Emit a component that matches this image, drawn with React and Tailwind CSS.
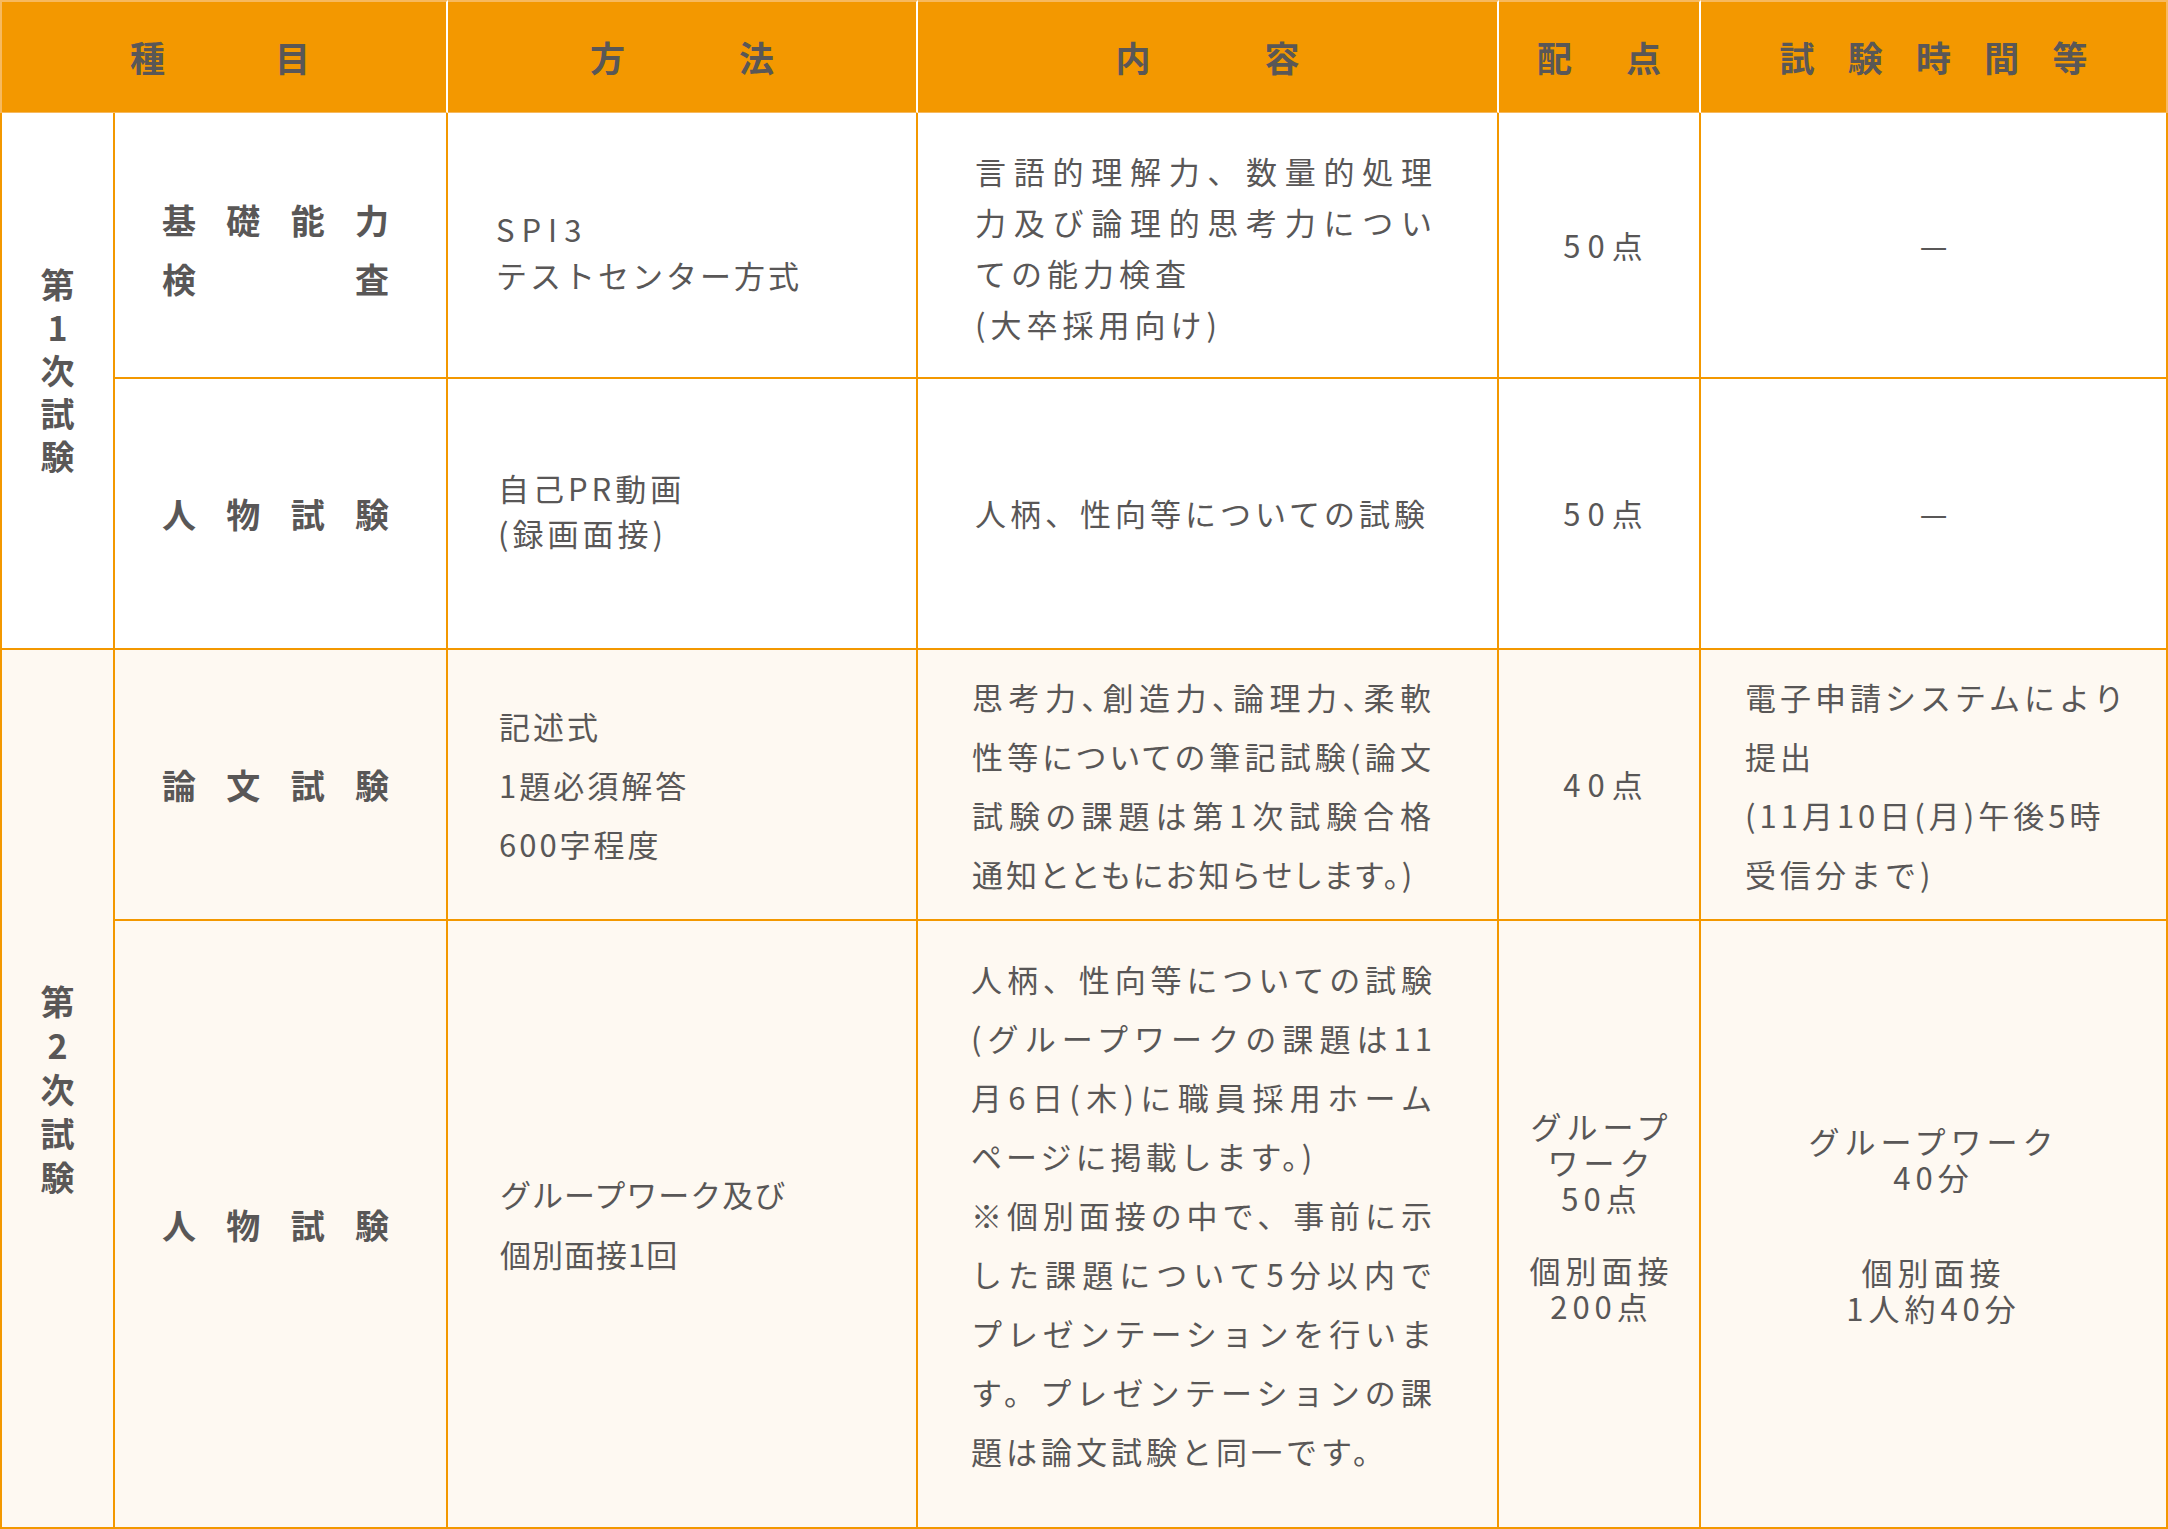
import React from 'react'

// one row of characters spread over a fixed width (種　　目 style headings)
function Spread({ text, className = '' }) {
  return (
    <div className={`flex justify-between ${className}`}>
      {text.split('').map((c, i) => (
        <span key={i}>{c}</span>
      ))}
    </div>
  )
}

// explicit lines, the ones listed in `justify` are stretched to the box width
function Lines({ lines, justify = [], className = '' }) {
  return (
    <div className={className}>
      {lines.map((line, i) => (
        <div
          key={i}
          className={justify.includes(i) ? 'whitespace-nowrap [text-align-last:justify]' : 'whitespace-nowrap'}
        >
          {line === '' ? '\u00a0' : line}
        </div>
      ))}
    </div>
  )
}

const cell = 'border-r-2 border-b-2 border-[#f39800] p-0 align-middle'

export default function App() {
  return (
    <div className="bg-white w-[2168px] min-h-[1529px]">
      <table className="table-fixed border-separate border-spacing-0 w-[2168px] font-['Noto_Sans_CJK_JP','Noto_Sans',sans-serif] text-[#595757]">
        <colgroup>
          <col className="w-[115px]" />
          <col className="w-[333px]" />
          <col className="w-[470px]" />
          <col className="w-[581px]" />
          <col className="w-[202px]" />
          <col className="w-[467px]" />
        </colgroup>
        <thead>
          <tr className="h-[113px] bg-[#f39800] text-[35px] font-bold">
            <th colSpan={2} className="p-0 border-t-2 border-l-2 border-b border-[#f7b95e] border-r-2 border-r-white">
              <Spread text="種目" className="ml-[128px] w-[180px]" />
            </th>
            <th className="p-0 border-t-2 border-b border-[#f7b95e] border-r-2 border-r-white">
              <Spread text="方法" className="mx-auto w-[184px]" />
            </th>
            <th className="p-0 border-t-2 border-b border-[#f7b95e] border-r-2 border-r-white">
              <Spread text="内容" className="mx-auto w-[184px]" />
            </th>
            <th className="p-0 border-t-2 border-b border-[#f7b95e] border-r-2 border-r-white">
              <Spread text="配点" className="mx-auto w-[124px]" />
            </th>
            <th className="p-0 border-t-2 border-b border-r-2 border-[#f7b95e]">
              <Spread text="試験時間等" className="mx-auto w-[308px]" />
            </th>
          </tr>
        </thead>
        <tbody className="text-[31px]">
          {/* 第1次試験 */}
          <tr className="h-[266px] bg-white">
            <td rowSpan={2} className={`${cell} border-l-2 text-center font-bold text-[34px] leading-[43px]`}>
              <div className="pb-[22px]">
                <div>第</div>
                <div>1</div>
                <div>次</div>
                <div>試</div>
                <div>験</div>
              </div>
            </td>
            <td className={`${cell} font-bold text-[34px] leading-[59px]`}>
              <div className="ml-[47px] w-[227px] pt-[8px]">
                <Spread text="基礎能力" />
                <Spread text="検査" />
              </div>
            </td>
            <td className={`${cell} leading-[46px]`}>
              <div className="pl-[48px] pt-[14px]">
                <div className="tracking-[7px]">SPI3</div>
                <div className="tracking-[3px]">テストセンター方式</div>
              </div>
            </td>
            <td className={`${cell} tracking-[5px] leading-[51px]`}>
              <Lines
                className="ml-[57px] w-[462px] pt-[4px]"
                justify={[0, 1]}
                lines={['言語的理解力、数量的処理', '力及び論理的思考力につい', 'ての能力検査', '(大卒採用向け)']}
              />
            </td>
            <td className={`${cell} text-center tracking-[7px] pl-[15px]`}>50点</td>
            <td className={`${cell} text-center`}>—</td>
          </tr>
          <tr className="h-[271px] bg-white">
            <td className={`${cell} font-bold text-[34px]`}>
              <Spread text="人物試験" className="ml-[47px] w-[227px]" />
            </td>
            <td className={`${cell} tracking-[4px] leading-[45px]`}>
              <Lines className="pl-[50px] pb-[8px]" lines={['自己PR動画', '(録画面接)']} />
            </td>
            <td className={`${cell} tracking-[4px]`}>
              <Lines className="pl-[57px]" lines={['人柄、性向等についての試験']} />
            </td>
            <td className={`${cell} text-center tracking-[7px] pl-[15px]`}>50点</td>
            <td className={`${cell} text-center`}>—</td>
          </tr>

          {/* 第2次試験 */}
          <tr className="h-[271px] bg-[#fef9f2]">
            <td rowSpan={2} className={`${cell} border-l-2 text-center font-bold text-[34px] leading-[44px]`}>
              <div>第</div>
              <div>2</div>
              <div>次</div>
              <div>試</div>
              <div>験</div>
            </td>
            <td className={`${cell} font-bold text-[34px]`}>
              <Spread text="論文試験" className="ml-[47px] w-[227px]" />
            </td>
            <td className={`${cell} tracking-[3px] leading-[59px]`}>
              <Lines className="pl-[51px]" lines={['記述式', '1題必須解答', '600字程度']} />
            </td>
            <td className={`${cell} tracking-[3px] leading-[59px] [font-feature-settings:'palt']`}>
              <Lines
                className="ml-[54px] w-[462px]"
                justify={[0, 1, 2]}
                lines={[
                  '思考力、創造力、論理力、柔軟',
                  '性等についての筆記試験(論文',
                  '試験の課題は第1次試験合格',
                  '通知とともにお知らせします。)',
                ]}
              />
            </td>
            <td className={`${cell} text-center tracking-[7px] pl-[15px]`}>40点</td>
            <td className={`${cell} tracking-[4px] leading-[59px]`}>
              <Lines
                className="pl-[44px]"
                lines={['電子申請システムにより', '提出', '(11月10日(月)午後5時', '受信分まで)']}
              />
            </td>
          </tr>
          <tr className="h-[608px] bg-[#fef9f2]">
            <td className={`${cell} font-bold text-[34px]`}>
              <Spread text="人物試験" className="ml-[47px] w-[227px]" />
            </td>
            <td className={`${cell} tracking-[1px] leading-[60px]`}>
              <Lines className="pl-[52px]" lines={['グループワーク及び', '個別面接1回']} />
            </td>
            <td className={`${cell} tracking-[4px] leading-[59px]`}>
              <Lines
                className="ml-[53px] w-[465px] pb-[20px]"
                justify={[0, 1, 2, 4, 5, 6, 7]}
                lines={[
                  '人柄、性向等についての試験',
                  '(グループワークの課題は11',
                  '月6日(木)に職員採用ホーム',
                  'ページに掲載します。)',
                  '※個別面接の中で、事前に示',
                  'した課題について5分以内で',
                  'プレゼンテーションを行いま',
                  'す。プレゼンテーションの課',
                  '題は論文試験と同一です。',
                ]}
              />
            </td>
            <td className={`${cell} text-center tracking-[5px] leading-[36px] pl-[5px]`}>
              <div className="pb-[16px]">
                <div>グループ</div>
                <div>ワーク</div>
                <div>50点</div>
                <div>&nbsp;</div>
                <div>個別面接</div>
                <div>200点</div>
              </div>
            </td>
            <td className={`${cell} text-center tracking-[5px] leading-[36px]`}>
              <div className="flex flex-col gap-[59px]">
                <div>
                  <div>グループワーク</div>
                  <div>40分</div>
                </div>
                <div>
                  <div>個別面接</div>
                  <div>1人約40分</div>
                </div>
              </div>
            </td>
          </tr>
        </tbody>
      </table>
    </div>
  )
}
